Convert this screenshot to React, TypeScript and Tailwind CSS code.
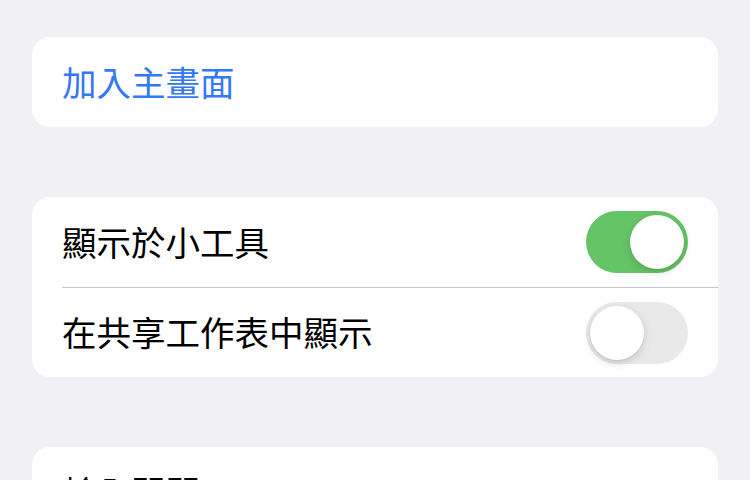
import React from "react";

function Toggle({ on }: { on: boolean }) {
  return (
    <div
      className={
        "relative h-[62px] w-[102px] shrink-0 rounded-full " +
        (on ? "bg-[#65c466]" : "bg-[#e9e9ea]")
      }
    >
      <div
        className={
          "absolute top-[4px] h-[54px] w-[54px] rounded-full bg-white shadow-[0_3px_8px_rgba(0,0,0,0.15),0_1px_1px_rgba(0,0,0,0.06)] " +
          (on ? "left-[44px]" : "left-[4px]")
        }
      />
    </div>
  );
}

export default function App() {
  return (
    <div
      className="h-[480px] w-[750px] overflow-hidden bg-[#f0f0f5] px-[32px] pt-[37px]"
      style={{ fontFamily: '"Noto Sans CJK TC", "Noto Sans", sans-serif' }}
    >
      <div className="flex h-[90px] items-center rounded-[18px] bg-white pl-[30px]">
        <span className="-mt-[2px] text-[34.5px] leading-none text-[#3478f6]">加入主畫面</span>
      </div>

      <div className="mt-[70px] rounded-[18px] bg-white">
        <div className="flex h-[90px] items-center justify-between pl-[30px] pr-[30px]">
          <span className="-mt-[2px] text-[34.5px] leading-none text-black">顯示於小工具</span>
          <Toggle on={true} />
        </div>
        <div className="ml-[30px] h-px bg-[#c6c6c8]" />
        <div className="flex h-[89px] items-center justify-between pl-[30px] pr-[30px]">
          <span className="-mt-[2px] text-[34.5px] leading-none text-black">在共享工作表中顯示</span>
          <Toggle on={false} />
        </div>
      </div>

      <div className="mt-[70px] rounded-[18px] bg-white">
        <div className="flex h-[90px] items-center pl-[30px]">
          <span className="-mt-[2px] text-[34.5px] leading-none text-black">輸入開關</span>
        </div>
      </div>
    </div>
  );
}
